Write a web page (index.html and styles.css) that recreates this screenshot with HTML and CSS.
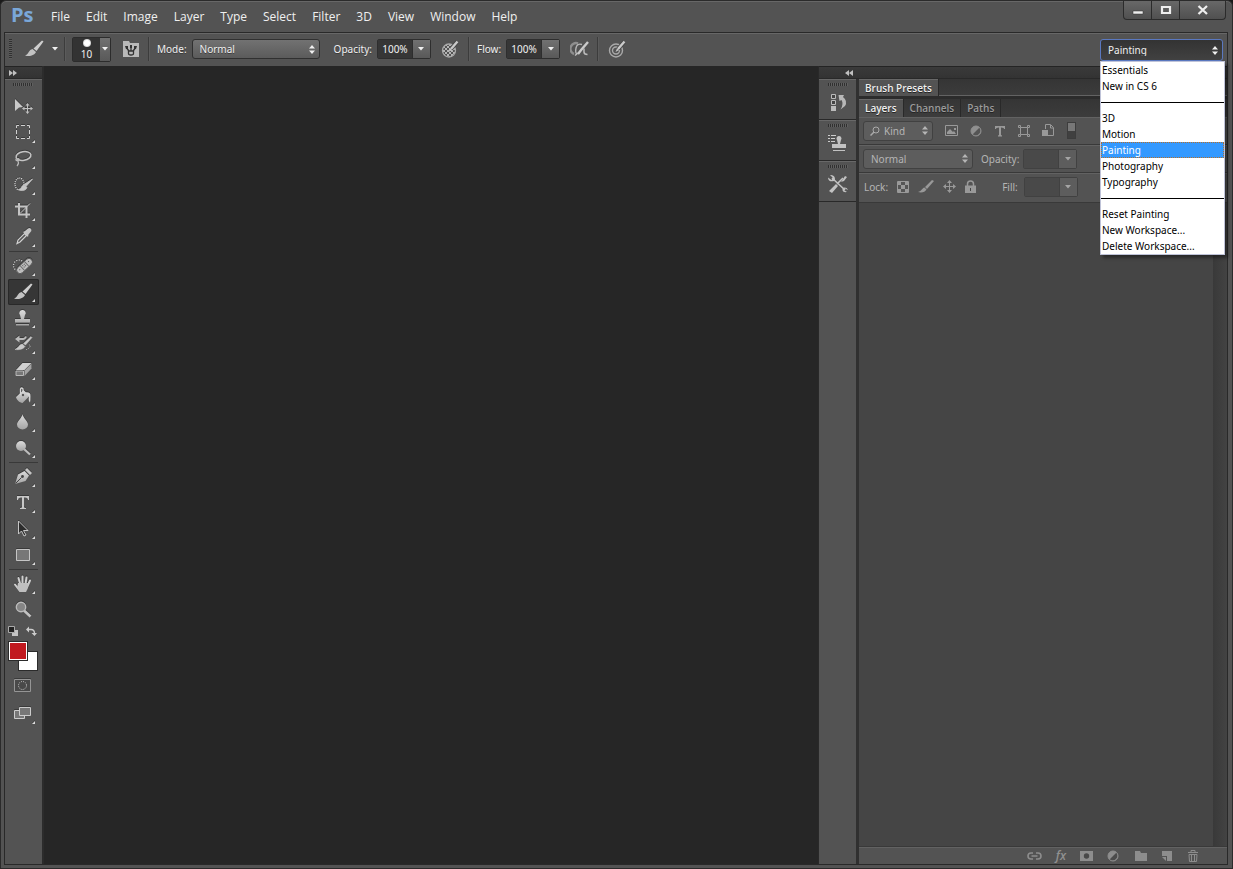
FILE: index.html
```html
<!DOCTYPE html>
<html lang="en">
<head>
<meta charset="utf-8">
<title>Ps</title>
<link rel="stylesheet" href="styles.css">
</head>
<body>
<svg class="defs" aria-hidden="true">
  <defs>
    <linearGradient id="metal" x1="0" y1="0" x2="0" y2="1"><stop offset="0" stop-color="#dcdcdc"/><stop offset="1" stop-color="#a4a4a4"/></linearGradient>
    <pattern id="checks" width="4" height="4" patternUnits="userSpaceOnUse"><path d="M0 0h2v2H0zM2 2h2v2H2z" fill="#b5b5b5"/></pattern>
    <symbol id="brush" viewBox="0 0 30 26"><path d="M23 4.500 24.500 5.500 17.500 15 14.500 12.500Z" fill="#cfcfcf"/><path d="M13.500 13 17 16C16 19 11 21 6 19.500 9.500 18.500 10 13.500 13.500 13Z" fill="#c2c2c2"/></symbol>
    <symbol id="pressure" viewBox="0 0 18 18"><path d="M16.500 1.500 10 9" stroke="#444" stroke-width="4"/><path d="M16.500 1.500 10 9" stroke="#cacaca" stroke-width="2.400"/><path d="M9 8.500 11 10 7.500 12Z" fill="#cacaca"/></symbol>
    <symbol id="updown" viewBox="0 0 6 9"><path d="M0 3.500 3 0 6 3.500ZM0 5.500 3 9 6 5.500Z" fill="currentColor"/></symbol>
    <symbol id="down" viewBox="0 0 6 4"><path d="M0 0H6L3 3.500Z" fill="currentColor"/></symbol>
  </defs>
</svg>
<div class="window">
  <header class="titlebar">
    <div class="logo">Ps</div>
    <nav class="menus" aria-label="Main menu">
      <button>File</button><button>Edit</button><button>Image</button><button>Layer</button><button>Type</button><button>Select</button><button>Filter</button><button>3D</button><button>View</button><button>Window</button><button>Help</button>
    </nav>
    <div class="winctl">
      <button aria-label="Minimize"><svg width="12" height="12"><path d="M1 7h10v3H1z" fill="#eee" stroke="#333" stroke-width=".5"/></svg></button>
      <button aria-label="Maximize"><svg width="12" height="12"><path d="M2 3h8v6H2z" fill="none" stroke="#eee" stroke-width="2.200"/></svg></button>
      <button class="close" aria-label="Close"><svg width="12" height="12"><path d="M1.500 2 10 10M10 2 1.500 10" stroke="#eee" stroke-width="2.300"/></svg></button>
    </div>
  </header>

  <div class="frame">
    <section class="options" aria-label="Tool options">
      <span class="grip-v"></span>
      <button class="plain tool-preset" aria-label="Tool preset"><svg width="30" height="26"><use href="#brush"/></svg><svg class="arrow" width="6" height="4"><use href="#down"/></svg></button>
      <span class="vsep"></span>
      <button class="brush-picker" aria-label="Brush picker"><span class="tip"><i class="dot"></i>10</span><span class="drop"><svg width="6" height="4"><use href="#down"/></svg></span></button>
      <button class="plain folder" aria-label="Brush panel"><svg width="16" height="16"><path d="M0 0h6l1 2h9v14H0z" fill="#b9b9b9"/><path d="M5.500 10h5v2.500c0 2-5 2-5 0z" fill="none" stroke="#333" stroke-width="1.300"/><path d="M8 6v4M4 7.500 6 10M12 7.500 10 10" stroke="#333" stroke-width="1.300"/><path d="M2 5h3v3H3zM7 4h2v3H7zM11 5h3l-1 3h-2z" fill="#333"/></svg></button>
      <span class="vsep"></span>
      <label for="mode">Mode:</label>
      <span class="combo mode"><select id="mode"><option>Normal</option></select><svg width="6" height="9"><use href="#updown"/></svg></span>
      <label for="opacity" class="opacity-label">Opacity:</label>
      <span class="field"><input id="opacity" value="100%"><button class="drop" aria-label="Opacity slider"><svg width="6" height="4"><use href="#down"/></svg></button></span>
      <button class="plain pressure" aria-label="Opacity pressure"><svg width="18" height="18"><circle cx="8" cy="10.500" r="6.500" fill="url(#checks)" stroke="#a9a9a9" stroke-width="1.300"/><use href="#pressure"/></svg></button>
      <span class="vsep"></span>
      <label for="flow">Flow:</label>
      <span class="field"><input id="flow" value="100%"><button class="drop" aria-label="Flow slider"><svg width="6" height="4"><use href="#down"/></svg></button></span>
      <button class="plain airbrush" aria-label="Airbrush"><svg width="20" height="18"><path d="M8 3.500A5.500 5.500 0 0 0 4 14" fill="none" stroke="#8f8f8f" stroke-width="2.500"/><path d="M12 4.500Q7 3 6 8T7 14" fill="none" stroke="#b5b5b5" stroke-width="1.400"/><path d="M18 2 11.500 9.500 8 14" fill="none" stroke="#cacaca" stroke-width="2.400"/><path d="M14 8.500V12Q14 14.500 17.500 14.500M5 15.500 8 13" fill="none" stroke="#bcbcbc" stroke-width="1.500"/></svg></button>
      <span class="vsep"></span>
      <button class="plain size-pressure" aria-label="Size pressure"><svg width="18" height="18"><circle cx="8" cy="10.500" r="6.500" fill="none" stroke="#a9a9a9" stroke-width="1.400"/><circle cx="8" cy="10.500" r="3.500" fill="none" stroke="#a9a9a9" stroke-width="1.400"/><use href="#pressure"/></svg></button>
      <div class="workspace">
        <span class="combo dark"><select aria-label="Workspace"><option>Painting</option></select><svg width="6" height="9"><use href="#updown"/></svg></span>
        <div class="popup" role="menu">
          <button role="menuitem">Essentials</button>
          <button role="menuitem">New in CS 6</button>
          <hr>
          <button role="menuitem">3D</button>
          <button role="menuitem">Motion</button>
          <button role="menuitem" class="current">Painting</button>
          <button role="menuitem">Photography</button>
          <button role="menuitem">Typography</button>
          <hr>
          <button role="menuitem">Reset Painting</button>
          <button role="menuitem">New Workspace...</button>
          <button role="menuitem">Delete Workspace...</button>
        </div>
      </div>
    </section>

    <main class="work">
      <aside class="tools" aria-label="Tools">
        <div class="dock-head"><svg width="8" height="6"><path d="M0 0 4 3 0 6ZM4 0 8 3 4 6Z" fill="#c0c0c0"/></svg></div>
        <div class="tool-list">
          <span class="grip-h"></span>
          <button class="tool only" aria-label="Move"><svg width="30" height="26"><path d="M7 5 15 13 11 13.500 7 17Z" fill="#c9c9c9"/><path d="M19.500 10v9M15 14.500h9" stroke="#c0c0c0" fill="none"/><path d="M17.500 11.500 19.500 9l2 2.500zM17.500 17.500l2 2.500 2-2.500zM16.500 12.500 14 14.500l2.500 2zM22.500 12.500l2.500 2-2.500 2z" fill="#c0c0c0"/></svg></button>
          <button class="tool" aria-label="Marquee"><svg width="30" height="26"><path d="M8.500 8V5.500H11M13 5.500h4M19 5.500h2.500V8M21.500 10v4M21.500 16v2.500H19M17 18.500h-4M11 18.500H8.500V16M8.500 14v-4" fill="none" stroke="#d0d0d0"/></svg></button>
          <button class="tool" aria-label="Lasso"><svg width="30" height="26"><ellipse cx="15.500" cy="10" rx="7.500" ry="4.300" fill="none" stroke="#c4c4c4" stroke-width="1.500" transform="rotate(-10 15.500 10)"/><path d="M9 12c-3 2 1 4 2 2s-3-2-1 1c1 2 0 4-1 5" fill="none" stroke="#b8b8b8" stroke-width="1.200"/></svg></button>
          <button class="tool" aria-label="Quick selection"><svg width="30" height="26"><ellipse cx="11.500" cy="12" rx="4.500" ry="6" fill="none" stroke="#ddd" stroke-width="1.200" stroke-dasharray="1 1"/><path d="M24.500 7 18 14.500 16 12.500ZM16 13 19 15.500C18 18.500 14 19.500 10.500 17.500 14 17 13 13.500 16 13Z" fill="#c6c6c6" stroke="#c6c6c6" stroke-width=".8"/></svg></button>
          <button class="tool" aria-label="Crop"><svg width="30" height="26"><path d="M11 5v11.500h11M7 8.500h11.500V20" fill="none" stroke="#c4c4c4" stroke-width="2"/><path d="M12 15.500 22 5.500" stroke="#c4c4c4"/></svg></button>
          <button class="tool" aria-label="Eyedropper"><svg width="30" height="26"><path d="M9 19.500 10 16 16.500 9.500 18.500 11.500 12 18Z" fill="#555" stroke="#d0d0d0" stroke-width="1.200"/><path d="M15 8 17 7 20 4.500Q22 3.500 23 5T22.500 8L20.500 10.500 20 13Z" fill="#c4c4c4"/></svg></button>
          <hr>
          <button class="tool" aria-label="Healing brush"><svg width="30" height="26"><circle cx="11" cy="12.500" r="5.500" fill="none" stroke="#ddd" stroke-width="1.200" stroke-dasharray="1 1.500"/><g transform="rotate(-43 16.500 13)"><rect x="7" y="9.500" width="19" height="7" rx="3.500" fill="#bdbdbd" stroke="#505050" stroke-width=".8"/><path d="M13.500 9.500v7M19.500 9.500v7" stroke="#6b6b6b"/><path d="M15 11h1v1h-1zM17 13h1v1h-1zM17 11h1v1h-1zM15 13h1v1h-1zM10 12h1v1h-1zM22 12h1v1h-1z" fill="#555"/></g></svg></button>
          <button class="tool active" aria-label="Brush"><svg width="30" height="26"><use href="#brush"/></svg></button>
          <button class="tool" aria-label="Clone stamp"><svg width="30" height="26"><path d="M14.500 5a3 3 0 0 1 2.500 5l-1 4h6v3.500H7V14h6l-1-4a3 3 0 0 1 2.500-5ZM8 19h13v1.500H8z" fill="url(#metal)"/></svg></button>
          <button class="tool" aria-label="History brush"><svg width="30" height="26"><path d="M23 5.500 24 6.500 17.500 14 15.500 12.500ZM14.500 13 17 15.500C15 18.500 11 19 7 18.500 10.500 17 11 13.500 14.500 13Z" fill="#c8c8c8" stroke="#c8c8c8" stroke-width=".5"/><path d="M10 8h5q2 0 3-2.500" fill="none" stroke="#bbb" stroke-width="2"/><path d="M7 8l4.500-3.500v7Z" fill="#bbb"/><path d="M21 13.500q2 1.500.5 3t-4.500 2.500" fill="none" stroke="#ccc" stroke-dasharray="1 1.200"/></svg></button>
          <button class="tool" aria-label="Eraser"><svg width="30" height="26"><path d="M14.500 6H23.500l-7 7H8Z" fill="#d0d0d0"/><path d="M8 14h7.500v4.500H8Z" fill="#777" stroke="#b8b8b8"/><path d="M16.500 13.500 23.500 6.500v5l-7 7.500Z" fill="#a2a2a2"/></svg></button>
          <button class="tool" aria-label="Paint bucket"><svg width="30" height="26"><path d="M8 14 15.500 7l6 6-7 7c-3 0-6.500-4-6.500-6Z" fill="url(#metal)"/><path d="M12.500 12V6q1-2 2.500 0v5" fill="none" stroke="#d5d5d5" stroke-width="1.300"/><path d="M17 9.500q6-1 5.500 4 0 4-.5 6-2-2-1-6Z" fill="#d5d5d5"/><circle cx="15" cy="12" r="1.200" fill="#555"/></svg></button>
          <button class="tool" aria-label="Blur"><svg width="30" height="26"><path d="M14.500 5C15 9 20 12 20 15.500A5.500 5 0 0 1 9 15.500C9 12 14 9 14.500 5Z" fill="url(#metal)"/></svg></button>
          <button class="tool" aria-label="Dodge"><svg width="30" height="26"><path d="M15.500 13.500 22 19.500" stroke="#bdbdbd" stroke-width="2.200"/><circle cx="13" cy="11" r="5" fill="url(#metal)"/></svg></button>
          <hr>
          <button class="tool" aria-label="Pen"><svg width="30" height="26"><path d="M7 20 10 10.500 16.500 7 21 11.500 17.500 17Z" fill="url(#metal)"/><path d="M17 6 19 4l5 5-2 2Z" fill="#c4c4c4"/><path d="M7.500 19.500 13.500 13.500" stroke="#444"/><circle cx="14.500" cy="12.500" r="1.400" fill="#444"/></svg></button>
          <button class="tool type" aria-label="Type"><svg width="30" height="26"><path d="M9 6h12v4h-1q0-2.500-3-2.500h-1V17q0 1 2 1v1h-6v-1q2 0 2-1V7.500h-1q-3 0-3 2.500H9Z" fill="#c8c8c8"/></svg></button>
          <button class="tool" aria-label="Path selection"><svg width="30" height="26"><path d="M10.500 5v13l3-3 2.500 5 2-1-2.500-4.500H20Z" fill="#2c2c2c" stroke="#c5c5c5"/></svg></button>
          <button class="tool" aria-label="Rectangle"><svg width="30" height="26"><path d="M8.500 7.500h13v11h-13z" fill="#777" stroke="#c5c5c5"/></svg></button>
          <hr>
          <button class="tool" aria-label="Hand"><svg width="30" height="26"><path d="M12 20 7 13.500M12.500 14 10.500 7M14.500 13V5.500M17.500 13 18.500 6.500M19.500 15 22 9.500" stroke="#cecece" stroke-width="2" stroke-linecap="round"/><path d="M10 12h10.500l-.5 5-2 4h-6l-3-4Z" fill="#bfbfbf"/></svg></button>
          <button class="tool only" aria-label="Zoom"><svg width="30" height="26"><path d="M16 13.500 22.500 19.500" stroke="#c2c2c2" stroke-width="2.600"/><circle cx="13" cy="10" r="4.700" fill="#858585" stroke="#bbb" stroke-width="1.400"/></svg></button>
          <div class="mini-row">
            <button class="plain" aria-label="Default colors"><svg width="11" height="11"><path d="M4 4h6v6H4z" fill="#c4c4c4"/><path d="M.5.5h6v6h-6z" fill="#222" stroke="#aaa"/></svg></button>
            <button class="plain" aria-label="Swap colors"><svg width="11" height="11"><path d="M2 3.500h3q3.500 0 3.500 4" fill="none" stroke="#ccc" stroke-width="1.300"/><path d="M0 3.500 3 .5v6zM5.500 7h5.500l-2.500 3z" fill="#ccc"/></svg></button>
          </div>
          <div class="swatches"><button class="swatch back" aria-label="Background color"></button><button class="swatch fore" aria-label="Foreground color"></button></div>
          <button class="tool only mask" aria-label="Quick mask"><svg width="30" height="26"><path d="M6.500 7.500h16v12h-16z" fill="#494949" stroke="#959595"/><circle cx="14.500" cy="13.500" r="4" fill="none" stroke="#ccc" stroke-dasharray="1 1.100"/></svg></button>
          <button class="tool" aria-label="Screen mode"><svg width="30" height="26"><path d="M6.500 9.500h10v8h-10z" fill="#777" stroke="#ccc"/><path d="M11.500 6.500h11v8h-11z" fill="#777" stroke="#ccc"/></svg></button>
        </div>
      </aside>

      <div class="canvas"></div>

      <section class="docks">
        <div class="dock-head right"><svg width="8" height="6"><path d="M4 0 0 3 4 6ZM8 0 4 3 8 6Z" fill="#c0c0c0"/></svg></div>
        <div class="dock-body">
          <aside class="icon-dock" aria-label="Collapsed panels">
            <div class="cell"><span class="grip-h"></span><button class="plain" aria-label="History"><svg width="20" height="20"><path d="M3.500 2.500h4v4h-4zM3.500 8.500h4v4h-4z" fill="#444" stroke="#bbb"/><path d="M3 14h5v5H3z" fill="#bbb"/><path d="M10.500 3H16L15 5Q20 9 17 14L12.500 17.500Q16 12 13.500 8L11.500 9Z" fill="#b8b8b8"/></svg></button></div>
            <div class="cell"><span class="grip-h"></span><button class="plain" aria-label="Clone source"><svg width="20" height="20"><path d="M0 2h2v1H0zM3 2h5v1H3zM0 5h2v1H0zM3 5h4v1H3zM0 8h2v1H0zM3 8h4v1H3z" fill="#ccc"/><path d="M11 3a2.500 2.500 0 0 1 2 4l-1 4h6v4H4v-4h6L9 7a2.500 2.500 0 0 1 2-4ZM5 17h12v1H5z" fill="#c2c2c2"/></svg></button></div>
            <div class="cell"><span class="grip-h"></span><button class="plain" aria-label="Tool presets"><svg width="20" height="20"><path d="M4 4 17 16M15 4 9 10" stroke="#c2c2c2" stroke-width="1.600"/><path d="M8 10 10 12 4 19 1 17ZM17 2l2 1-3 4-3 1Z" fill="#c2c2c2"/><path d="M2 1 5 4 3.500 6 0 3.500C0 7 3 8 6 7L7 5.500C7 2 5 1 2 1ZM19 18l-3-2 1-1.500 3 1.500c-1-3-4-3-5-2s-1 5 4 4Z" fill="#c2c2c2"/></svg></button></div>
          </aside>
          <section class="panels">
            <div class="tabs first"><button class="tab on">Brush Presets</button></div>
            <div class="tabs"><button class="tab on">Layers</button><button class="tab">Channels</button><button class="tab">Paths</button></div>
            <div class="row filter">
              <span class="combo kind"><svg class="lens" width="10" height="10"><circle cx="6" cy="4" r="3" fill="none" stroke="#aaa"/><path d="M4 6 .5 9.500" stroke="#aaa" stroke-width="1.500"/></svg><select aria-label="Filter kind"><option>Kind</option></select><svg width="6" height="9"><use href="#updown"/></svg></span>
              <button class="plain" aria-label="Pixel layers"><svg width="14" height="12"><path d="M.5.5h12v10H.5z" fill="none" stroke="#999"/><path d="M2 9V7l3-3 3 3 1-1 2 3zM9 3h2v2H9z" fill="#999"/></svg></button>
              <button class="plain" aria-label="Adjustment layers"><svg width="12" height="12"><circle cx="6" cy="6" r="5" fill="#8f8f8f"/><path d="M2.500 9.500 9.500 2.500A5 5 0 0 1 2.500 9.500Z" fill="#555"/><circle cx="6" cy="6" r="5" fill="none" stroke="#8f8f8f"/></svg></button>
              <button class="plain" aria-label="Type layers"><svg width="12" height="12"><path d="M1 1h10v3h-1q0-1.500-3-1.500V10l1 .5v1H4v-1l1-.5V2.500q-3 0-3 1.500H1Z" fill="#999"/></svg></button>
              <button class="plain" aria-label="Shape layers"><svg width="12" height="12"><path d="M2.500 2.500h7v7h-7z" fill="none" stroke="#999"/><path d="M.5.5h2v2h-2zM9.500.5h2v2h-2zM.5 9.500h2v2h-2zM9.500 9.500h2v2h-2z" fill="#535353" stroke="#999"/></svg></button>
              <button class="plain" aria-label="Smart objects"><svg width="12" height="13"><path d="M3.500 5V.5h5l3 3v8H6M8.500 1v3H11" fill="none" stroke="#999"/><path d="M0 6h6v6H0z" fill="#999"/></svg></button>
              <button class="switch" aria-label="Filter switch"></button>
            </div>
            <div class="row blend">
              <span class="combo normal"><select aria-label="Blend mode"><option>Normal</option></select><svg width="6" height="9"><use href="#updown"/></svg></span>
              <label for="lop">Opacity:</label>
              <span class="field dim"><input id="lop"><button class="drop" aria-label="Layer opacity"><svg width="6" height="4"><use href="#down"/></svg></button></span>
            </div>
            <div class="row lock">
              <span class="locks">Lock:</span>
              <button class="plain" aria-label="Lock transparency"><svg width="12" height="12"><path d="M.5.5h11v11H.5z" fill="#555" stroke="#999"/><path d="M1 1h3v3H1zM8 1h3v3H8zM4 4h4v4H4zM1 8h3v3H1zM8 8h3v3H8z" fill="#999"/></svg></button>
              <button class="plain" aria-label="Lock pixels"><svg width="16" height="13"><path d="M14 0 16 1 9 9 7 7ZM6.500 7.500 8.500 9.500C7 12 4 13 0 12 4 11 4 8 6.500 7.500Z" fill="#999"/></svg></button>
              <button class="plain" aria-label="Lock position"><svg width="13" height="13"><path d="M6.500 1v11M1 6.500h11" stroke="#999"/><path d="M4 3 6.500 0 9 3zM4 10l2.500 3L9 10zM3 4 0 6.500 3 9zM10 4l3 2.500L10 9z" fill="#999"/></svg></button>
              <button class="plain" aria-label="Lock all"><svg width="11" height="13"><path d="M2.500 6V4q0-3 3-3t3 3v2" fill="none" stroke="#999" stroke-width="1.500"/><path d="M0 5.500h11V13H0z" fill="#999"/><path d="M5 8h1v3H5z" fill="#444"/></svg></button>
              <label for="fill">Fill:</label>
              <span class="field dim"><input id="fill"><button class="drop" aria-label="Layer fill"><svg width="6" height="4"><use href="#down"/></svg></button></span>
            </div>
            <div class="layer-list"><div class="scroll"></div></div>
            <footer class="panel-foot">
              <button class="plain" aria-label="Link layers"><svg width="15" height="12"><path d="M6 3H4Q1 3 1 6t3 3h2M9 3h2q3 0 3 3t-3 3H9M4.500 6h6" fill="none" stroke="#8d8d8d" stroke-width="1.600"/></svg></button>
              <button class="plain fx" aria-label="Layer style">fx</button>
              <button class="plain" aria-label="Add mask"><svg width="13" height="12"><path d="M0 1h13v10H0z" fill="#8d8d8d"/><circle cx="6.500" cy="6" r="2.700" fill="#494949"/></svg></button>
              <button class="plain" aria-label="Adjustment layer"><svg width="14" height="12"><circle cx="6" cy="6" r="5" fill="#8d8d8d"/><path d="M2.500 9.500 9.500 2.500A5 5 0 0 1 2.500 9.500Z" fill="#4c4c4c"/><circle cx="6" cy="6" r="5" fill="none" stroke="#8d8d8d"/></svg></button>
              <button class="plain" aria-label="New group"><svg width="13" height="12"><path d="M0 1h5l1 2h6v8H0z" fill="#8d8d8d"/></svg></button>
              <button class="plain" aria-label="New layer"><svg width="11" height="12"><path d="M0 1h10v10H5V6H0zM0 7h4v4z" fill="#8d8d8d"/></svg></button>
              <button class="plain" aria-label="Delete layer"><svg width="12" height="12"><path d="M1 2.500h10M4 2V.5h4V2M2 4.500h8l-.5 7h-7zM4.500 5v6M7.500 5v6" fill="none" stroke="#8d8d8d"/></svg></button>
            </footer>
          </section>
        </div>
      </section>
    </main>
  </div>
</div>
</body>
</html>
```

FILE: styles.css
```css
* { box-sizing: border-box; }
html, body { height: 100%; }
body {
  margin: 0;
  background: #1a1a1a;
  color: #e8e8e8;
  font: 10px/12px "Noto Sans", "Open Sans", sans-serif;
}
button, input, select { font: inherit; color: inherit; margin: 0; padding: 0; border: 0; background: none; border-radius: 0; outline: 0; }
svg { display: block; flex: none; }
.defs { position: absolute; width: 0; height: 0; }
.plain { display: flex; align-items: center; justify-content: center; flex: none; }

.window {
  display: flex;
  flex-direction: column;
  height: 100vh;
  padding: 0 4px 3px 3px;
  border: 1px solid #2b2b2b;
  border-radius: 6px 6px 0 0;
  background: #535353;
  box-shadow: inset 0 1px #676767;
}

.titlebar { display: flex; height: 31px; flex: none; }
.logo {
  width: 39px;
  padding-left: 7px;
  color: #7aa7d9;
  font: bold 20px/28px "Open Sans", sans-serif;
}
.menus { display: flex; flex: 1; }
.menus button { padding: 1px 8px 0; font: 12px/30px "Open Sans", sans-serif; color: #f0f0f0; white-space: nowrap; }
.winctl {
  display: flex;
  height: 19px;
  margin-right: 2px;
  border: 1px solid #2b2b2b;
  border-top: 0;
  border-radius: 0 0 4px 4px;
  background: linear-gradient(#686868, #505050);
}
.winctl button { display: flex; align-items: center; justify-content: center; width: 28px; border-right: 1px solid #2b2b2b; }
.winctl .close { width: 45px; border-right: 0; }

.frame { display: flex; flex-direction: column; flex: 1; min-height: 0; border: 1px solid #292929; }

.options {
  display: flex;
  align-items: center;
  flex: none;
  height: 33px;
  padding-bottom: 2px;
  border-top: 1px solid #676767;
  color: #f0f0f0;
  text-shadow: 0 1px #3a3a3a;
}
.grip-v { width: 3px; height: 20px; margin-left: 4px; background: repeating-linear-gradient(#303030 0 1px, #5c5c5c 1px 2px); }
.tool-preset { margin-left: 7px; }
.arrow { margin-left: 3px; }
.vsep { width: 2px; height: 24px; background: #3c3c3c; border-right: 1px solid #5b5b5b; }
.tool-preset + .vsep { margin-left: 6px; }
.brush-picker { display: flex; height: 25px; margin-left: 6px; border: 1px solid #2c2c2c; border-radius: 2px; }
.tip { display: flex; flex-direction: column; align-items: center; width: 27px; height: 23px; background: #333; line-height: 13px; }
.dot { width: 8px; height: 8px; margin: 1px 0; border-radius: 50%; background: radial-gradient(#fff 45%, #888); }
.drop { display: flex; align-items: center; justify-content: center; background: linear-gradient(#717171, #595959); }
.brush-picker .drop { width: 10px; }
.folder { margin: 0 9px 0 12px; }
.options label { margin-left: 7px; white-space: nowrap; }
.options .opacity-label { margin-left: 14px; }

.combo {
  position: relative;
  display: flex;
  align-items: center;
  height: 20px;
  border: 1px solid #303030;
  border-radius: 3px;
  background: linear-gradient(#727272, #5b5b5b);
}
.combo select { flex: 1; width: 0; height: 100%; padding-left: 7px; appearance: none; text-shadow: inherit; }
.combo > svg:last-child { margin-right: 4px; pointer-events: none; }
.mode { width: 128px; margin-left: 5px; }
.field { display: flex; height: 20px; margin-left: 5px; border: 1px solid #2e2e2e; border-radius: 2px; }
.field input { width: 34px; height: 100%; background: #363636; text-align: center; text-shadow: inherit; }
.field .drop { width: 18px; border-left: 1px solid #2e2e2e; }
.pressure { margin: 0 9px 0 10px; }
.airbrush { margin: 0 7px 0 10px; }
.size-pressure { margin-left: 9px; }

.workspace { position: relative; width: 123px; margin: 2px 4px 0 auto; }
.dark { height: 22px; border-color: #5a78c0; background: linear-gradient(#333, #414141); }
.popup {
  position: absolute;
  z-index: 2;
  top: 22px;
  left: 0;
  width: 125px;
  border: 1px solid #bfc3d8;
  background: #fff;
  color: #000;
  text-shadow: none;
  box-shadow: 3px 3px 3px #0006;
}
.popup button { display: block; width: 100%; height: 16px; padding: 0 1px; line-height: 16px; text-align: left; white-space: nowrap; }
.popup .current { background: #3399ff; color: #fff; outline: 1px dotted #b5702c; outline-offset: -1px; }
.popup hr { height: 1px; margin: 8px 0 7px; border: 0; background: #000; }

.work { display: flex; flex: 1; min-height: 0; }
.dock-head { height: 13px; flex: none; padding: 3px 4px; border-top: 1px solid #242424; border-bottom: 1px solid #292929; background: linear-gradient(#3a3a3a, #333); }
.dock-head.right { padding-left: 26px; }

.tools { display: flex; flex-direction: column; width: 37px; }
.tool-list { display: flex; flex-direction: column; flex: 1; padding: 0 3px; border-top: 1px solid #686868; }
.grip-h { width: 20px; height: 3px; flex: none; background: repeating-linear-gradient(90deg, #303030 0 1px, #606060 1px 2px); }
.tool-list .grip-h { margin: 3px 0 8px 5px; }
.tool { position: relative; width: 31px; height: 26px; flex: none; filter: drop-shadow(0 -1px 0 #3a3a3a); }
.tool::after { content: ""; position: absolute; right: 4px; bottom: 3px; border: solid transparent; border-width: 3px 0 0 3px; border-bottom: 3px solid #ddd; border-top: 0; }
.tool.only::after { display: none; }
.tool.active { border-radius: 2px; background: #363636; box-shadow: inset 0 0 0 1px #292929; filter: none; }
.tool-list hr { width: 29px; height: 3px; flex: none; margin: 0 1px; border: solid #535353; border-width: 1px 0; background: #393939; }
.mini-row { display: flex; align-items: flex-start; gap: 7px; height: 18px; padding-top: 3px; }
.swatches { display: grid; grid-template: 10px 10px 10px / 10px 10px 10px; }
.swatch { border: 1px solid #2b2b2b; box-shadow: inset 0 0 0 1px #fff; }
.back { grid-area: 2 / 2 / 4 / 4; background: #fff; }
.fore { grid-area: 1 / 1 / 3 / 3; background: #c1191f; }
.mask { margin: 1px 0 3px; }

.canvas { flex: 1; min-width: 0; border-left: 2px solid #2c2c2c; background: #262626; }

.docks { display: flex; flex-direction: column; width: 409px; flex: none; border-left: 1px solid #292929; }
.dock-body { display: flex; flex: 1; min-height: 0; }
.icon-dock { width: 37px; flex: none; background: #535353; }
.cell { display: flex; flex-direction: column; height: 41px; padding: 3px 9px 0; border-top: 1px solid #686868; border-bottom: 1px solid #292929; }
.cell .plain { margin-top: 6px; }

.panels { display: flex; flex-direction: column; flex: 1; min-width: 0; border-left: 3px solid #303030; }
.tabs { display: flex; height: 18px; flex: none; background: linear-gradient(#353535, #3c3c3c); }
.tabs.first { height: 20px; border-bottom: 3px solid #2c2c2c; box-shadow: inset 0 -1px #636363; }
.tab { padding: 0 6px; border-right: 1px solid #292929; color: #9b9b9b; font: 600 10px/12px "Open Sans", sans-serif; text-shadow: 0 1px #252525; white-space: nowrap; }
.tab.on { background: #535353; color: #f0f0f0; box-shadow: inset 0 1px #686868; }
.row { display: flex; align-items: center; height: 28px; flex: none; padding-left: 4px; border-bottom: 1px solid #393939; box-shadow: inset 0 1px #626262; color: #b5b5b5; white-space: nowrap; }
.row .combo, .row .field { border-color: #414141; background: #5d5d5d; }
.row .drop { border-color: #414141; background: #5d5d5d; color: #a5a5a5; }
.kind { width: 70px; }
.lens { margin-left: 6px; }
.kind select { padding-left: 4px; }
.filter .plain { width: 14px; margin-left: 10px; }
.filter .kind + .plain { margin-left: 12px; }
.switch { width: 9px; height: 17px; margin-left: 12px; border: 1px solid #3d3d3d; background: linear-gradient(#777 8px, #404040 8px); }
.normal { width: 110px; }
.blend label { margin-left: 8px; }
.field.dim input { background: #494949; }
.blend .field { margin-left: 4px; }
.lock { height: 30px; padding: 0 0 2px 5px; gap: 9px; }
.lock > .field { margin-left: -3px; }
.lock label { margin-left: 17px; }
.layer-list { display: flex; justify-content: flex-end; flex: 1; background: #454545; }
.scroll { width: 14px; background: linear-gradient(90deg, #393939, #434343); }
.panel-foot { display: flex; align-items: center; justify-content: flex-end; gap: 14px; height: 18px; flex: none; padding-right: 28px; border-top: 1px solid #393939; background: #535353; box-shadow: inset 0 1px #626262; }
.fx { color: #909090; font: italic 600 12px/14px "Open Sans", sans-serif; }
```
